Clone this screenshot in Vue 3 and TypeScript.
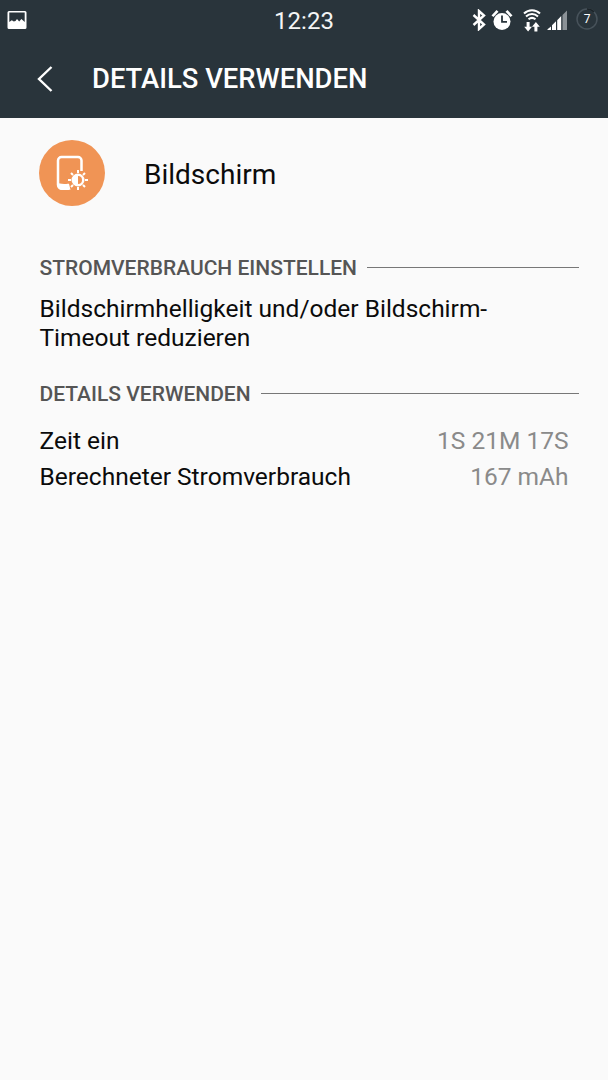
<template>
  <div class="screen">
    <div class="statusbar">
      <svg class="pic" width="20" height="20" viewBox="0 0 20 20">
        <path fill="#fff" fill-rule="evenodd" d="M2 1h16a1.500 1.500 0 0 1 1.500 1.500v15A1.500 1.500 0 0 1 18 19H2a1.500 1.500 0 0 1-1.500-1.500v-15A1.500 1.500 0 0 1 2 1zM2.300 2.600v9.400l2.500-1.800 2 1.300 1.700-.6 1.500-2 2.200 2.600 2.200-2.400 3.300 2.900V2.600z" />
      </svg>
      <span class="clock">12:23</span>
      <div class="status-icons">
        <svg width="14" height="22" viewBox="0 0 14 22" class="ic-bt">
          <path fill="none" stroke="#fff" stroke-width="2.400" d="M1.500 6l10.500 9.500-5 4.500V2l5 4.500L1.500 16" />
        </svg>
        <svg width="22" height="22" viewBox="0 0 22 22" class="ic-alarm">
          <circle cx="11" cy="12.500" r="8.500" fill="#fff" />
          <path fill="none" stroke="#29343b" stroke-width="1.800" d="M11 6.500V12.800H16" />
          <path fill="#fff" d="M0.500 6.500 5.500 1 7.500 2.800 2.500 8zM21.500 6.500 16.500 1 14.500 2.800 19.500 8z" />
        </svg>
        <svg width="20" height="24" viewBox="0 0 20 24" class="ic-wifi">
          <path fill="none" stroke="#fff" stroke-width="2" d="M2 5.500C6.500 1 13.500 1 18 5.500M4 8.500C7.500 5.200 12.500 5.200 16 8.500M6.500 11.200C8.500 9.700 11.500 9.700 13.500 11.200" />
          <path fill="#fff" d="M4.600 14h3v4.800h2.400l-3.900 4.700-3.900-4.700h2.400zM12.400 23.500v-4.800h-2.400l3.900-4.700 3.900 4.700h-2.400v4.800z" />
        </svg>
        <svg width="21" height="22" viewBox="0 0 21 22" class="ic-signal">
          <path fill="#fff" d="M0.500 21h3.500v-3.500l-3.500 2.800zM5 21h4v-8.700L5 16.200zM10.200 21h4V7l-4 4.300z" />
          <path fill="#8b9297" d="M15.500 21h4.500V1.500l-4.500 4.500z" />
        </svg>
        <div class="battery">
          <svg width="22" height="22" viewBox="0 0 22 22">
            <circle cx="11" cy="11" r="10" fill="none" stroke="#47525a" stroke-width="1.500" />
            <path fill="none" stroke="#1c2429" stroke-width="1.500" d="M11 1A10 10 0 0 1 18 3.900" />
          </svg>
          <span>7</span>
        </div>
      </div>
    </div>

    <div class="toolbar">
      <svg class="back" width="18" height="28" viewBox="0 0 18 28">
        <path fill="none" stroke="#fff" stroke-width="2.400" d="M15.500 2 3 14l12.500 12" />
      </svg>
      <h1>DETAILS VERWENDEN</h1>
    </div>

    <div class="content">
      <div class="app-head">
        <div class="app-icon">
          <svg width="66" height="66" viewBox="0 0 66 66">
            <path fill="none" stroke="#fff" stroke-width="2.500" d="M30 48.800H23a4 4 0 0 1-4-4V20.500a3.500 3.500 0 0 1 3.500-3.500H39a3.500 3.500 0 0 1 3.500 3.500V31" />
            <path fill="#fff" d="M19 43c3 .8 8 1.200 11 .8l1.500 6H23a4 4 0 0 1-4-4z" />
            <circle cx="39" cy="40" r="6.500" fill="#fff" />
            <path fill="#f09455" d="M39 36a4 4 0 0 1 0 8z" />
            <path fill="none" stroke="#fff" stroke-width="2" d="M39 30v3M39 47v3M29 40h3M46 40h3M32 33l2 2M44 45l2 2M32 47l2-2M44 35l2-2" />
          </svg>
        </div>
        <span class="app-name">Bildschirm</span>
      </div>

      <div class="section first">
        <span class="section-title">STROMVERBRAUCH EINSTELLEN</span>
        <span class="rule"></span>
      </div>
      <p class="advice">Bildschirmhelligkeit und/oder Bildschirm-<br />Timeout reduzieren</p>

      <div class="section second">
        <span class="section-title">DETAILS VERWENDEN</span>
        <span class="rule"></span>
      </div>
      <div class="rows">
        <div v-for="row in rows" :key="row.label" class="row">
          <span>{{ row.label }}</span>
          <span class="value">{{ row.value }}</span>
        </div>
      </div>
    </div>
  </div>
</template>

<script setup lang="ts">
const rows: { label: string; value: string }[] = [
  { label: 'Zeit ein', value: '1S 21M 17S' },
  { label: 'Berechneter Stromverbrauch', value: '167 mAh' },
]
</script>

<style>
html,
body {
  margin: 0;
  background: #fafafa;
}
</style>

<style scoped>
.screen {
  width: 608px;
  height: 1080px;
  overflow: hidden;
  background: #fafafa;
  font-family: Roboto, "Noto Sans", sans-serif;
  color: #0b0b0b;
}

.statusbar {
  height: 40px;
  background: #29343b;
  position: relative;
  display: flex;
  align-items: center;
  justify-content: space-between;
  padding: 0 10px 0 7px;
  box-sizing: border-box;
}

.clock {
  position: absolute;
  left: 0;
  right: 0;
  top: 7px;
  text-align: center;
  color: #f4f5f5;
  font-size: 24px;
  line-height: 28px;
}

.status-icons {
  display: flex;
  align-items: center;
}

.ic-bt {
  margin-right: 5px;
}

.ic-alarm {
  margin-right: 9px;
}

.ic-wifi {
  margin-right: 5px;
}

.ic-signal {
  margin-right: 8px;
}

.battery {
  position: relative;
  width: 22px;
  height: 22px;
  margin-top: -3px;
}

.battery svg {
  display: block;
}

.battery span {
  position: absolute;
  inset: 0;
  text-align: center;
  color: #fff;
  font-size: 12px;
  line-height: 22px;
}

.toolbar {
  height: 78px;
  background: #29343b;
  display: flex;
  align-items: center;
  padding-left: 36px;
  box-sizing: border-box;
}

.back {
  margin-right: 38px;
}

.toolbar h1 {
  margin: 0;
  color: #fff;
  font-size: 27.4px;
  font-weight: 500;
  line-height: 32px;
}

.content {
  padding: 22px 30px 0 39.500px;
}

.app-head {
  display: flex;
  align-items: center;
  height: 66px;
}

.app-icon {
  width: 66px;
  height: 66px;
  border-radius: 50%;
  background: #f09455;
  margin-right: 39px;
  margin-left: -0.500px;
}

.app-icon svg {
  display: block;
}

.app-name {
  font-size: 28px;
  line-height: 32px;
  margin-top: 3px;
}

.section {
  display: flex;
  align-items: center;
  margin-right: -0.500px;
}

.section.first {
  margin-top: 49px;
}

.section.second {
  margin-top: 29px;
}

.section-title {
  color: #555;
  font-size: 21px;
  font-weight: 500;
  line-height: 26px;
  white-space: nowrap;
}

.rule {
  flex: 1;
  height: 1px;
  background: #777;
  margin: 0 0 2px 10px;
}

.advice {
  margin: 13px 0 0;
  font-size: 24.500px;
  line-height: 29px;
}

.rows {
  margin-top: 16px;
  display: flex;
  flex-direction: column;
  font-size: 24.500px;
  line-height: 36px;
}

.row {
  display: flex;
  justify-content: space-between;
  margin-right: 9.500px;
}

.value {
  color: #8a8a8a;
}
</style>
